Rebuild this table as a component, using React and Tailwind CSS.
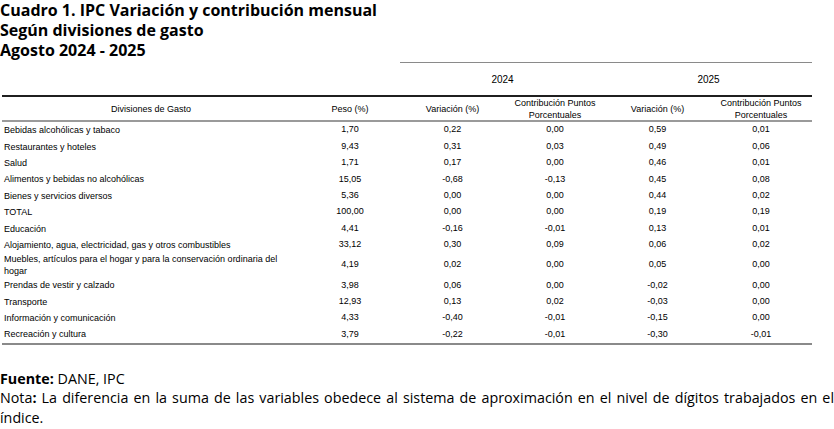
const rows = [
  ["Bebidas alcohólicas y tabaco", "1,70", "0,22", "0,00", "0,59", "0,01"],
  ["Restaurantes y hoteles", "9,43", "0,31", "0,03", "0,49", "0,06"],
  ["Salud", "1,71", "0,17", "0,00", "0,46", "0,01"],
  ["Alimentos y bebidas no alcohólicas", "15,05", "-0,68", "-0,13", "0,45", "0,08"],
  ["Bienes y servicios diversos", "5,36", "0,00", "0,00", "0,44", "0,02"],
  ["TOTAL", "100,00", "0,00", "0,00", "0,19", "0,19"],
  ["Educación", "4,41", "-0,16", "-0,01", "0,13", "0,01"],
  ["Alojamiento, agua, electricidad, gas y otros combustibles", "33,12", "0,30", "0,09", "0,06", "0,02"],
  ["Muebles, artículos para el hogar y para la conservación ordinaria del hogar", "4,19", "0,02", "0,00", "0,05", "0,00"],
  ["Prendas de vestir y calzado", "3,98", "0,06", "0,00", "-0,02", "0,00"],
  ["Transporte", "12,93", "0,13", "0,02", "-0,03", "0,00"],
  ["Información y comunicación", "4,33", "-0,40", "-0,01", "-0,15", "0,00"],
  ["Recreación y cultura", "3,79", "-0,22", "-0,01", "-0,30", "-0,01"],
];

const cols = "grid grid-cols-[298px_100px_105px_100px_105px_102px]";

export default function App() {
  return (
    <div className="w-[834px] h-[429px] bg-white text-black overflow-hidden">
      <div className="font-['Open_Sans',sans-serif] font-bold text-[16px] leading-[20px]">
        <p>Cuadro 1. IPC Variación y contribución mensual</p>
        <p>Según divisiones de gasto</p>
        <p>Agosto 2024 - 2025</p>
      </div>

      <div className="mt-[2px] ml-[2px] w-[810px] font-['Liberation_Sans',Arial,sans-serif] text-[9px]">
        <div className="flex h-[33px]">
          <div className="w-[398px]" />
          <div className="flex flex-1 border-t border-[#8a8a8a] text-[10px]">
            <div className="w-[205px] flex items-center justify-center">2024</div>
            <div className="w-[207px] flex items-center justify-center">2025</div>
          </div>
        </div>

        <div className={`${cols} h-[27px] border-t-2 border-b-2 border-t-[#1f1f1f] border-b-[#9a9a9a] text-center leading-[12px]`}>
          <div className="flex items-center justify-center">Divisiones de Gasto</div>
          <div className="flex items-center justify-center">Peso (%)</div>
          <div className="flex items-center justify-center">Variación (%)</div>
          <div className="flex items-center justify-center">Contribución Puntos<br />Porcentuales</div>
          <div className="flex items-center justify-center">Variación (%)</div>
          <div className="flex items-center justify-center">Contribución Puntos<br />Porcentuales</div>
        </div>

        <div className="border-b-2 border-[#8a8a8a]">
          {rows.map((r) => (
            <div
              key={r[0]}
              className={`${cols} ${r[0].length > 60 ? "h-[24px]" : "h-[16.4px]"} items-center`}
            >
              <div className="pl-[2px] pr-[12px] leading-[12px]">{r[0]}</div>
              {r.slice(1).map((v, i) => (
                <div key={i} className="text-center">{v}</div>
              ))}
            </div>
          ))}
        </div>
      </div>

      <div className="mt-[24px] font-['Open_Sans',sans-serif] text-[14.3px] leading-[19.5px] text-justify">
        <p><span className="font-bold">Fuente:</span> DANE, IPC</p>
        <p>Nota<span className="font-bold">:</span> La diferencia en la suma de las variables obedece al sistema de aproximación en el nivel de dígitos trabajados en el índice.</p>
      </div>
    </div>
  );
}
